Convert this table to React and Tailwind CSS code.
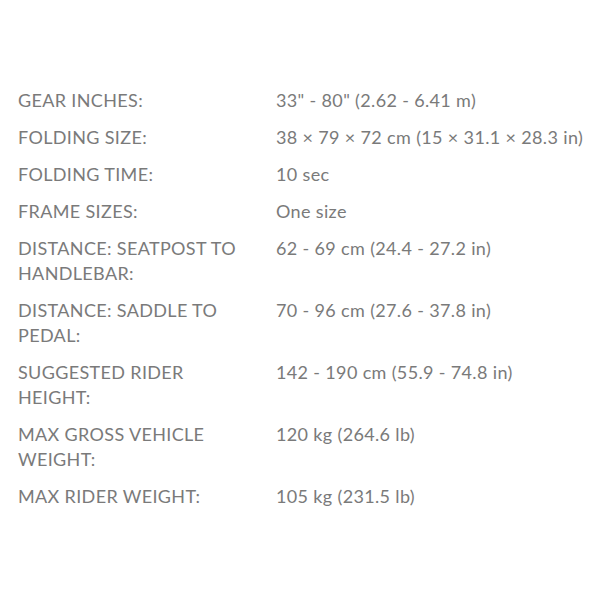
const rows = [
  ["GEAR INCHES:", "33\" - 80\" (2.62 - 6.41 m)"],
  ["FOLDING SIZE:", "38 × 79 × 72 cm (15 × 31.1 × 28.3 in)"],
  ["FOLDING TIME:", "10 sec"],
  ["FRAME SIZES:", "One size"],
  ["DISTANCE: SEATPOST TO HANDLEBAR:", "62 - 69 cm (24.4 - 27.2 in)"],
  ["DISTANCE: SADDLE TO PEDAL:", "70 - 96 cm (27.6 - 37.8 in)"],
  ["SUGGESTED RIDER HEIGHT:", "142 - 190 cm (55.9 - 74.8 in)"],
  ["MAX GROSS VEHICLE WEIGHT:", "120 kg (264.6 lb)"],
  ["MAX RIDER WEIGHT:", "105 kg (231.5 lb)"],
];

export default function App() {
  return (
    <div className="w-[595px] h-[595px] bg-white pt-[88px] pl-[18px] text-[#7a7a7a] text-[18px] leading-[25px] tracking-[0.35px] font-['Lato',sans-serif]">
      <dl className="flex flex-col gap-[12px]">
        {rows.map(([k, v]) => (
          <div key={k} className="flex">
            <dt className="w-[258px] shrink-0 pr-[18px]">{k}</dt>
            <dd className="flex-1">{v}</dd>
          </div>
        ))}
      </dl>
    </div>
  );
}
